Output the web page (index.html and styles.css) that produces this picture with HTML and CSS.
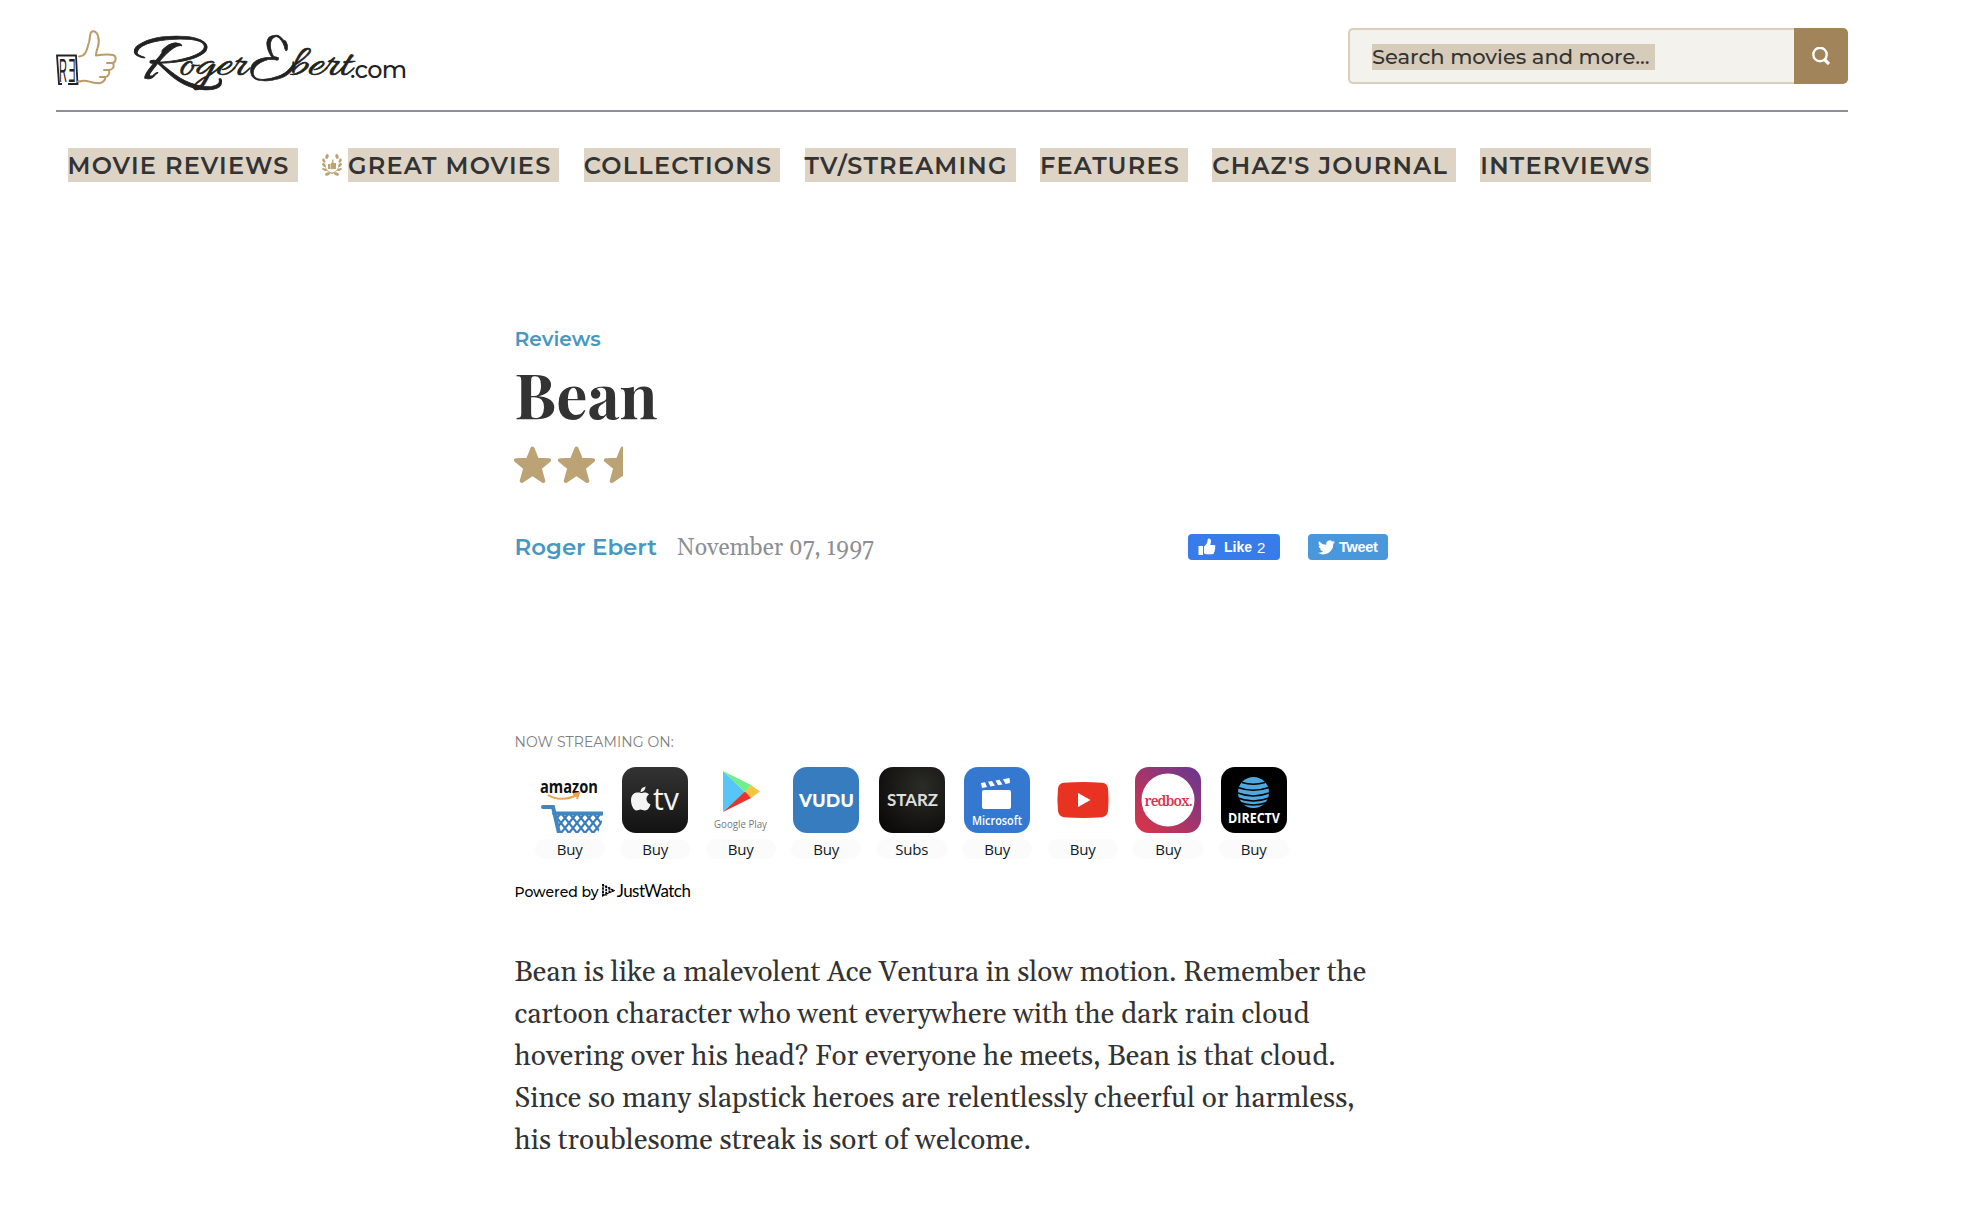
FILE: index.html
```
<!DOCTYPE html>
<html lang="en">
<head>
<meta charset="utf-8">
<title>Bean movie review | Roger Ebert</title>
<link rel="stylesheet" href="styles.css">
</head>
<body>
<header class="site-header">
  <a class="logo">
    <svg width="356" height="66" viewBox="0 0 356 66">
      <path d="M6 57H3L1 28.500H20l1.500 28.500H12" fill="none" stroke="#222" stroke-width="1.800"/>
      <text class="logo-cuff" x="3" y="54.500" textLength="8" lengthAdjust="spacingAndGlyphs">R</text>
      <text class="logo-cuff" transform="matrix(-1 0 0 1 19.500 0)" x="0" y="54.500" textLength="7" lengthAdjust="spacingAndGlyphs">E</text>
      <path d="M23 29.500c8-.5 8-9 10-14 1-3 .5-10 3-11 6-2 8 9 6 15-1 3-2 6-2 9 6-1 13-1.500 17-.5 4 1 3 7 0 8h-6m6 0c2 4-1 7-4 7h-5m5 0c1 4-1 7-4 7h-5m5 0c1 3-3 7-8 6-6 0-9-3-15-2-2 .5-3 .5-4 .5" fill="none" stroke="#bb9b66" stroke-width="2" stroke-linecap="round" stroke-linejoin="round"/>
      <text class="logo-script logo-cap" x="75" y="50" textLength="57" lengthAdjust="spacingAndGlyphs">R</text>
      <text class="logo-script" x="123" y="46.500" textLength="68" lengthAdjust="spacingAndGlyphs">oger</text>
      <text class="logo-script logo-cap" x="193" y="50" textLength="45" lengthAdjust="spacingAndGlyphs">E</text>
      <text class="logo-script" x="233" y="46.500" textLength="62" lengthAdjust="spacingAndGlyphs">bert</text>
      <text class="logo-com" x="294" y="51" textLength="57">.com</text>
    </svg>
  </a>
  <form class="search">
    <div class="search-field"><span class="selected">Search movies and more... </span></div>
    <div class="search-button">
      <svg width="18" height="18" viewBox="0 0 18 18" fill="none" stroke="#fff"><circle cx="8" cy="7.500" r="6.700" stroke-width="2.400"/><path d="M12.500 12.500l4.500 4.500" stroke-width="3.200"/></svg>
    </div>
  </form>
</header>
<nav class="main-nav">
  <a>MOVIE REVIEWS </a>
  <span class="nav-great">
    <svg width="20" height="22" viewBox="0 0 20 22" fill="#bba375">
      <path d="M6 10h2v5H6zM8.500 10l1.700-2V5.500h1.300V9H14v6H8.500z"/>
      <g id="branch"><ellipse cx="5" cy="2.500" rx="1.600" ry="2.500" transform="rotate(15 5 2.500)"/><ellipse cx="1.700" cy="6.500" rx="1.300" ry="2.200" transform="rotate(-20 1.700 6.500)"/><ellipse cx="1.900" cy="11" rx="1.300" ry="2.200" transform="rotate(-45 1.900 11)"/><ellipse cx="2.400" cy="15.500" rx="1.200" ry="2.500" transform="rotate(-65 2.400 15.500)"/><ellipse cx="5.500" cy="20" rx="2.500" ry="1.500" transform="rotate(-15 5.500 20)"/><path d="M4.500 4.500C2 8 3 15 7 17.500l4 1.500-.5 1C4 18.500 0 11 4.500 4.500z"/></g>
      <use href="#branch" transform="matrix(-1 0 0 1 20 0)"/>
    </svg>
    <a>GREAT MOVIES </a>
  </span>
  <a>COLLECTIONS </a>
  <a>TV/STREAMING </a>
  <a>FEATURES </a>
  <a>CHAZ'S JOURNAL </a>
  <a>INTERVIEWS</a>
</nav>
<main class="article">
  <a class="kicker">Reviews</a>
  <h1>Bean</h1>
  <div class="stars">
    <svg width="110" height="38" viewBox="0 0 110 38" fill="#bba375" stroke="#bba375" stroke-width="4" stroke-linejoin="round">
      <defs><path id="star" d="M18.500 2.500l4.600 11.200 12 .5-9.400 7.800 3.600 13-10.800-7.200L7.700 35l3.600-13L1.900 14.200l12-.5z"/><clipPath id="half"><path d="M88 0h21v38H88z"/></clipPath></defs>
      <use href="#star"/><use href="#star" x="44"/>
      <g clip-path="url(#half)"><use href="#star" x="90"/></g>
    </svg>
  </div>
  <div class="byline">
    <a class="author">Roger Ebert</a>
    <span class="date">November 07, 1997</span>
    <div class="share">
      <a class="btn like"><svg width="18" height="18" viewBox="0 0 18 18" fill="#fff"><path d="M.500 8H5v9H.500zM6 8.500c2-1.500 3.500-3.500 3.800-7.500.2-1 3.200-1 3.200 2 0 1.500-.5 2.500-.8 4H16c1.500 0 2 1.700.8 2.500.9.800.6 2-.3 2.400.6.900.2 2-.6 2.300.2 1-.4 2-1.500 2H9c-1.500 0-2-.4-3-.7z"/></svg><b>Like</b><span>2</span></a>
      <a class="btn tweet"><svg width="17" height="15" viewBox="0 0 24 20" fill="#fff"><path d="M24 2.400a10 10 0 0 1-2.800.8A4.900 4.900 0 0 0 23.300.5a10 10 0 0 1-3.100 1.200A4.900 4.900 0 0 0 11.800 6.200 14 14 0 0 1 1.700 1a4.900 4.900 0 0 0 1.500 6.600A5 5 0 0 1 1 7a4.900 4.900 0 0 0 3.900 4.900 5 5 0 0 1-2.200 0 4.900 4.900 0 0 0 4.600 3.400A10 10 0 0 1 0 17.400 14 14 0 0 0 21.500 5 10 10 0 0 0 24 2.400z"/></svg><b>Tweet</b></a>
    </div>
  </div>
  <section class="streaming">
    <h2>NOW STREAMING ON:</h2>
    <div class="offers">
      <div class="offer">
        <svg width="66" height="66" viewBox="0 0 66 66">
          <defs><pattern id="mesh" width="8" height="10" x="16" y="46" patternUnits="userSpaceOnUse"><path d="M-1-1.250l10 12.500M9-1.250l-10 12.500" stroke="#3a7db8" stroke-width="2.200"/></pattern></defs>
          <text x="3" y="26" class="t-amazon" textLength="58" lengthAdjust="spacingAndGlyphs">amazon</text>
          <path d="M11 28c8 5 19 5 29 0M36 27l6-1-2 6" fill="none" stroke="#eda04e" stroke-width="2"/>
          <path d="M18 47h47v8l-4 11H22z" fill="url(#mesh)"/>
          <path d="M6 40h10l6 26M17 46.500h48" fill="none" stroke="#3f87c2" stroke-width="4" stroke-linecap="round"/>
        </svg><span>Buy</span>
      </div>
      <div class="offer">
        <svg class="tile" width="66" height="66" viewBox="0 0 66 66">
          <defs><linearGradient id="atv" x2="0" y2="1"><stop stop-color="#333"/><stop offset="1" stop-color="#121212"/></linearGradient></defs>
          <path fill="url(#atv)" d="M0 0h66v66H0z"/>
          <path d="M19 26c2.500 0 4-1.500 7 .5l1 1c-4 2.500-3 8 1.500 10-1 3-3 6-5.500 6-2 0-3-1-4.500-1s-2.500 1-4 1c-3 0-5.500-6-5.500-10 0-8 6-8.500 10-7.500zM18.500 25c0-3 2-5 5-5.500 0 3-2 5.500-5 5.500z" fill="#f4f4f4"/>
          <text x="31" y="43" class="t-tv" textLength="26" lengthAdjust="spacingAndGlyphs">tv</text>
        </svg><span>Buy</span>
      </div>
      <div class="offer">
        <svg width="66" height="66" viewBox="0 0 66 66">
          <path d="M15 4v41l22-20z" fill="#58c5f8"/><path d="M15 4l28 14-6 7z" fill="#6df08b"/><path d="M43 18l9 6.500-9 6.500-6-6z" fill="#f5c443"/><path d="M15 45l28-14-6-6.500z" fill="#e8352c"/>
          <text x="6" y="60.500" class="t-play" textLength="53" lengthAdjust="spacingAndGlyphs">Google Play</text>
        </svg><span>Buy</span>
      </div>
      <div class="offer">
        <svg class="tile" width="66" height="66" viewBox="0 0 66 66"><path fill="#377cbf" d="M0 0h66v66H0z"/><text x="6" y="39.500" class="t-vudu" textLength="55" lengthAdjust="spacingAndGlyphs">VUDU</text></svg><span>Buy</span>
      </div>
      <div class="offer">
        <svg class="tile" width="66" height="66" viewBox="0 0 66 66"><defs><radialGradient id="stz" cx=".65" cy=".3" r=".8"><stop stop-color="#2b2b27"/><stop offset="1" stop-color="#0c0b09"/></radialGradient></defs><path fill="url(#stz)" d="M0 0h66v66H0z"/><text x="8" y="38.500" class="t-starz" textLength="51" lengthAdjust="spacingAndGlyphs">STARZ</text></svg><span>Subs</span>
      </div>
      <div class="offer">
        <svg class="tile" width="66" height="66" viewBox="0 0 66 66"><path fill="#3478cf" d="M0 0h66v66H0z"/><rect x="18" y="23" width="29" height="19" rx="2" fill="#fff"/><path d="M17 16l4-.7 2 4.700-5 1zM24 14.800l4-.7 3 4.700-4.500.7zM31.500 13.500l4-.7 3 4.700-4.500.7zM39 12.200l6.500-1.200.5 5-4.500.9z" fill="#fff"/><text x="8" y="58" class="t-ms" textLength="50" lengthAdjust="spacingAndGlyphs">Microsoft</text></svg><span>Buy</span>
      </div>
      <div class="offer">
        <svg width="66" height="66" viewBox="0 0 66 66"><path d="M14 15.800q19-1.600 38 0 5.500.4 6 6 1.200 11.500 0 22-.6 5.800-6 6.400-19 1.600-38 0-5.400-.6-6-6.400-1.200-10.500 0-22 .5-5.600 6-6z" fill="#e83323"/><path d="M28 26l12.500 7L28 40z" fill="#fff"/></svg><span>Buy</span>
      </div>
      <div class="offer">
        <svg class="tile" width="66" height="66" viewBox="0 0 66 66"><defs><linearGradient id="rbx" x1="0" y1="1" x2="1" y2="0"><stop stop-color="#dd3545"/><stop offset="1" stop-color="#663793"/></linearGradient></defs><path fill="url(#rbx)" d="M0 0h66v66H0z"/><circle cx="33" cy="33" r="26.500" fill="#fff"/><text x="9.500" y="39" class="t-redbox">redbox.</text></svg><span>Buy</span>
      </div>
      <div class="offer">
        <svg class="tile" width="66" height="66" viewBox="0 0 66 66"><path d="M0 0h66v66H0z"/><circle cx="32.500" cy="25.500" r="15.500" fill="#4fa9df"/><path d="M21 15.500q11 3.500 23 0M17 20.500q15 5.500 31 0M17 26q15 6 31 0M17 31q15 6 31 0M19 35.500q13 5 27 0" fill="none" stroke="#000" stroke-width="1.700"/><text x="7" y="56" class="t-dtv" textLength="52" lengthAdjust="spacingAndGlyphs">DIRECTV</text></svg><span>Buy</span>
      </div>
    </div>
    <div class="powered">
      <span>Powered by</span>
      <svg width="13" height="13" viewBox="0 0 13 13" fill="none" stroke="#000" stroke-width="1.800" stroke-dasharray="2.500 .7"><path d="M1 0v13M4.200 1.500v10M7.400 3.300v6.500M10.500 5.200v3"/><path d="M0 .8l12 5.700L0 12.200" stroke-width="1.200"/></svg>
      <span class="justwatch">JustWatch</span>
    </div>
  </section>
  <p class="body-text">Bean is like a malevolent Ace Ventura in slow motion. Remember the<br>cartoon character who went everywhere with the dark rain cloud<br>hovering over his head? For everyone he meets, Bean is that cloud.<br>Since so many slapstick heroes are relentlessly cheerful or harmless,<br>his troublesome streak is sort of welcome.</p>
</main>
</body>
</html>
```
FILE: styles.css
```
* { box-sizing: border-box; }
body { margin: 0; background: #fff; color: #333; font-family: Montserrat, Inter, sans-serif; }
.site-header { display: flex; justify-content: space-between; margin: 0 118px 0 56px; padding-top: 28px; height: 112px; border-bottom: 2px solid #8c8f99; }
.logo { display: block; height: 66px; margin-top: -1px; }
.logo svg { display: block; overflow: visible; }
.logo-cuff { font: 400 33px "Liberation Sans", sans-serif; fill: #222; }
.logo-script { font: 43px Allura, "Dancing Script", "Liberation Serif", cursive; fill: #222; stroke: #222; stroke-width: .7px; }
.logo-cap { font-size: 70px; }
.logo-com { font: 500 24px Montserrat, Inter, sans-serif; fill: #222; }
.search { display: flex; width: 500px; height: 56px; }
.search-field { flex: 1; display: flex; align-items: center; padding: 2px 0 0 22px; background: #f4f2ec; border: 2px solid #dacfbd; border-right: 0; border-radius: 5px 0 0 5px; }
.selected { background: #d7ccb9; font-size: 21px; font-weight: 500; line-height: 26px; letter-spacing: -.02px; white-space: pre; }
.search-button { width: 54px; display: flex; align-items: center; justify-content: center; background: #a1845a; border-radius: 0 5px 5px 0; }
.main-nav { display: flex; gap: 24.400px; padding: 36px 0 0 67.500px; height: 70px; }
.main-nav a { background: #ded4c5; font-size: 24px; font-weight: 600; letter-spacing: 1.22px; line-height: 33px; height: 34px; padding-top: 1px; white-space: pre; }
.nav-great { display: flex; gap: 6px; align-items: center; height: 34px; }
.article { margin-left: 514.500px; width: 873.500px; padding-top: 144px; }
.kicker { display: block; font-size: 20.300px; font-weight: 600; line-height: 26px; color: #4798c1; }
h1 { margin: 7px 0 0; font: 700 62px/70px "Playfair Display", "Liberation Serif", serif; color: #333; }
.stars { height: 38px; margin: 17px 0 0 -.500px; }
.stars svg { display: block; }
.byline { display: flex; align-items: center; height: 30px; margin-top: 48px; }
.author { font-size: 22.900px; font-weight: 600; color: #4798c1; }
.date { margin: 2px 0 0 20px; font-family: Gelasio, Georgia, "Liberation Serif", serif; font-size: 23px; color: #8c8f94; }
.share { display: flex; gap: 28px; margin-left: auto; }
.btn { display: flex; align-items: center; height: 26px; border-radius: 4px; color: #fff; font: 15px "Liberation Sans", sans-serif; }
.like { width: 92px; background: #387bea; padding-left: 10px; }
.like b { margin: 0 5px 0 8px; font-size: 14px; }
.tweet { width: 80px; background: #4a98dc; padding-left: 10px; }
.tweet b { margin-left: 4px; font-size: 14.500px; letter-spacing: -.3px; }
.streaming { margin-top: 171px; }
h2 { margin: 0; font-size: 14px; font-weight: 400; line-height: 18px; letter-spacing: .1px; color: #808080; }
.offers { display: grid; grid-template-columns: repeat(9, 85.500px); margin: 16px 0 0 12.500px; }
.offer { display: flex; flex-direction: column; align-items: center; gap: 6px; }
.offer span { width: 70px; height: 20px; border-radius: 10px; background: #fbfbfb; color: #0f1a26; font: 15px/20px "Open Sans", sans-serif; text-align: center; letter-spacing: -.2px; }
.tile { border-radius: 14px; }
.t-amazon { font: 700 18px "Open Sans", sans-serif; fill: #111; }
.t-tv { font: 500 31px "Open Sans", sans-serif; fill: #f4f4f4; }
.t-play { font: 500 11px "Open Sans", sans-serif; fill: #777; }
.t-vudu { font: 700 18px Montserrat, Inter, sans-serif; fill: #fff; }
.t-starz { font: 700 17px Lato, sans-serif; fill: #dedede; }
.t-ms { font: 600 12.500px "Open Sans", sans-serif; fill: #fff; }
.t-redbox { font: 600 14px "Noto Serif", "Liberation Serif", serif; letter-spacing: -.9px; fill: #df3350; }
.t-dtv { font: 700 14px "Open Sans", sans-serif; fill: #fff; }
.powered { display: flex; align-items: center; height: 20px; margin-top: 23px; color: #000; font-size: 14px; font-weight: 500; }
.powered svg { margin: -4px 2px 0 3px; }
.justwatch { margin-top: -3px; font: 17px Lato, sans-serif; letter-spacing: -.5px; }
.body-text { margin: 50px -20px 0 0; font: 28px/42px Gelasio, Georgia, "Liberation Serif", serif; white-space: nowrap; color: #333; }
```
